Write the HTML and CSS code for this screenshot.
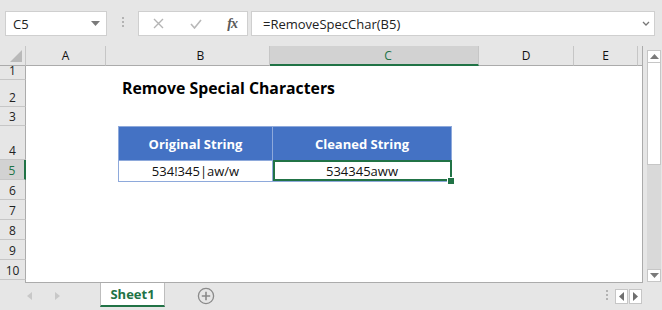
FILE: index.html
```html
<!DOCTYPE html>
<html lang="en">
<head>
  <meta charset="UTF-8" />
  <title>Remove Special Characters</title>
  <link rel="stylesheet" href="styles.css">
</head>
<body>
  <div class="app">
    <!-- formula bar -->
    <div class="formula-bar">
      <div class="namebox">
        <span>C5</span>
        <svg width="9" height="5" viewBox="0 0 9 5"><path d="M0 0h9L4.5 5z" fill="#7a7a7a"/></svg>
      </div>
      <div class="grip"><i></i><i></i><i></i></div>
      <div class="fx-box">
        <svg width="11" height="11" viewBox="0 0 11 11"><path d="M1 1l9 9M10 1l-9 9" stroke="#b4b4b4" stroke-width="1.4"/></svg>
        <svg width="12" height="10" viewBox="0 0 12 10"><path d="M1 5l3.5 4L11 1" stroke="#b8b8b8" stroke-width="1.6" fill="none"/></svg>
        <span class="fx">fx</span>
      </div>
      <div class="formula">
        <span>=RemoveSpecChar(B5)</span>
        <svg width="8" height="5" viewBox="0 0 8 5"><path d="M1 1l3 3 3-3" stroke="#777" stroke-width="1.3" fill="none"/></svg>
      </div>
    </div>

    <!-- sheet -->
    <div class="sheet">
      <div class="grid">
        <div class="col-headers">
          <div class="corner">
            <svg width="12" height="12" viewBox="0 0 12 12"><path d="M12 0v12H0z" fill="#b9b9b9"/></svg>
          </div>
          <div class="col w-a">A</div>
          <div class="col w-b">B</div>
          <div class="col w-c active">C</div>
          <div class="col w-d">D</div>
          <div class="col w-e">E</div>
          <div class="col w-f"></div>
        </div>
        <div class="grid-body">
          <div class="row-headers">
            <div class="rh" style="height:14px">1</div>
            <div class="rh" style="height:27px">2</div>
            <div class="rh" style="height:19px">3</div>
            <div class="rh" style="height:34px">4</div>
            <div class="rh active" style="height:20px">5</div>
            <div class="rh" style="height:20px">6</div>
            <div class="rh" style="height:20px">7</div>
            <div class="rh" style="height:20px">8</div>
            <div class="rh" style="height:20px">9</div>
            <div class="rh" style="height:20px">10</div>
            <div class="rh last"></div>
          </div>
          <div class="cells">
            <h1 class="title">Remove Special Characters</h1>
            <table class="data">
              <tr>
                <th class="c1">Original String</th>
                <th class="c2">Cleaned String</th>
              </tr>
              <tr>
                <td class="c1">534!345|aw/w</td>
                <td class="c2 selected">534345aww<span class="handle"></span></td>
              </tr>
            </table>
          </div>
        </div>
      </div>
      <div class="vscroll">
        <div class="sbtn up"><svg width="9" height="5" viewBox="0 0 9 5"><path d="M0 5h9L4.5 0z" fill="#7a7a7a"/></svg></div>
        <div class="thumb"></div>
        <div class="track"></div>
        <div class="sbtn down"><svg width="9" height="5" viewBox="0 0 9 5"><path d="M0 0h9L4.5 5z" fill="#7a7a7a"/></svg></div>
      </div>
    </div>

    <!-- sheet tabs -->
    <div class="tabbar">
      <div class="nav">
        <svg width="5" height="8" viewBox="0 0 5 8"><path d="M5 0v8L0 4z" fill="#c8c8c8"/></svg>
        <svg width="5" height="8" viewBox="0 0 5 8"><path d="M0 0v8l5-4z" fill="#c8c8c8"/></svg>
      </div>
      <div class="tab">Sheet1</div>
      <div class="add">
        <svg width="18" height="18" viewBox="0 0 18 18"><circle cx="9" cy="9" r="7.6" stroke="#8a8a8a" stroke-width="1.3" fill="none"/><path d="M9 4.8v8.4M4.8 9h8.4" stroke="#8a8a8a" stroke-width="1.6"/></svg>
      </div>
      <div class="spacer"></div>
      <div class="grip"><i></i><i></i><i></i></div>
      <div class="hnav">
        <div class="hbtn"><svg width="5" height="9" viewBox="0 0 5 9"><path d="M5 0v9L0 4.5z" fill="#6f6f6f"/></svg></div>
        <div class="hbtn"><svg width="5" height="9" viewBox="0 0 5 9"><path d="M0 0v9l5-4.5z" fill="#6f6f6f"/></svg></div>
      </div>
    </div>
  </div>
</body>
</html>
```

FILE: styles.css
```css
:root {
  font-family: 'Open Sans', 'Liberation Sans', sans-serif;
}
html, body {
  margin: 0; padding: 0;
  width: 662px;
  height: 310px;
  overflow: hidden;
}
.app {
  width: 662px;
  height: 310px;
  background: #e6e6e6;
  display: flex;
  flex-direction: column;
}

/* formula bar */
.formula-bar {
  height: 46px;
  box-sizing: border-box;
  padding: 11px 7px 0 5px;
  display: flex;
  align-items: flex-start;
}
.namebox, .fx-box, .formula {
  height: 25px;
  box-sizing: border-box;
  background: #fff;
  border: 1px solid #cfcfcf;
  display: flex;
  align-items: center;
}
.namebox {
  width: 102px;
  padding: 0 6px 0 7px;
  justify-content: space-between;
  font-size: 13px;
  color: #222;
}
.grip {
  width: 31px;
  display: flex;
  flex-direction: column;
  align-items: center;
  gap: 2px;
  padding-top: 6px;
}
.grip i {
  width: 2px;
  height: 2px;
  background: #b3b3b3;
}
.fx-box {
  width: 110px;
  padding: 0 8px 0 14px;
  justify-content: space-between;
}
.fx {
  font-family: 'Liberation Serif', serif;
  font-style: italic;
  font-weight: bold;
  font-size: 14px;
  color: #595959;
  letter-spacing: -1px;
  padding-right: 2px;
}
.formula {
  margin-left: 3px;
  flex: 1;
  padding: 0 4px 0 11px;
  justify-content: space-between;
  font-size: 13px;
  color: #222;
}

/* sheet */
.sheet {
  height: 238px;
  display: flex;
}
.grid {
  width: 643px;
  display: flex;
  flex-direction: column;
}
.col-headers {
  height: 20px;
  display: flex;
}
.corner {
  width: 26px;
  box-sizing: border-box;
  border-right: 1px solid #c6c6c6;
  border-bottom: 1px solid #ababab;
  display: flex;
  align-items: flex-end;
  justify-content: flex-end;
  padding: 0 3px 3px 0;
}
.col {
  box-sizing: border-box;
  border-right: 1px solid #c6c6c6;
  border-bottom: 1px solid #ababab;
  font-size: 12px;
  line-height: 19px;
  text-align: center;
  color: #111;
}
.w-a { width: 80px; }
.w-b { width: 164px; padding-left: 26px; }
.w-c { width: 209px; padding-left: 28px; }
.w-d { width: 95px; }
.w-e { width: 64px; }
.w-f { width: 5px; border-right: 1px solid #ababab; }
.col.active {
  background: #d2d2d2;
  color: #217346;
  border-bottom: 2px solid #217346;
}

.grid-body {
  flex: 1;
  display: flex;
  min-height: 0;
}
.row-headers {
  width: 26px;
  display: flex;
  flex-direction: column;
}
.rh {
  box-sizing: border-box;
  border-right: 1px solid #ababab;
  border-bottom: 1px solid #c6c6c6;
  font-size: 12px;
  display: flex;
  align-items: flex-end;
  justify-content: center;
  padding-bottom: 1px;
  line-height: 14px;
  color: #222;
}
.rh.active {
  background: #d2d2d2;
  color: #217346;
  border-right: 2px solid #217346;
}
.rh.last {
  flex: 1;
  border-bottom: none;
}
.cells {
  flex: 1;
  background: #fff;
  border-right: 1px solid #ababab;
  border-bottom: 1px solid #ababab;
  padding: 12px 0 0 92px;
}
.title {
  margin: 0 0 0 4px;
  font-size: 15.8px;
  line-height: 20px;
  font-weight: 700;
  color: #000;
  height: 48px;
}
.data {
  border-collapse: collapse;
  font-size: 13px;
}
.data th, .data td {
  padding: 0;
  text-align: center;
  box-sizing: border-box;
}
.data th {
  height: 34px;
  background: #4472c4;
  color: #fff;
  font-weight: 700;
  border: 1px solid #8ea9db;
  padding-top: 1px;
}
.data td {
  height: 21px;
  color: #111;
  border: 1px solid #8ea9db;
}
.data .c1 { width: 154px; }
.data .c2 { width: 179px; }
.data td.selected {
  position: relative;
  outline: 2px solid #217346;
  outline-offset: -2px;
}
.handle {
  position: absolute;
  right: -4px;
  bottom: -4px;
  width: 6px;
  height: 6px;
  background: #217346;
  border: 1px solid #fff;
}

/* vertical scrollbar */
.vscroll {
  flex: 1;
  display: flex;
  flex-direction: column;
  align-items: center;
  padding: 4px 0 1px 3px;
}
.sbtn {
  width: 14px;
  height: 13px;
  box-sizing: border-box;
  background: #fff;
  border: 1px solid #c6c6c6;
  display: flex;
  align-items: center;
  justify-content: center;
}
.thumb {
  width: 14px;
  height: 102px;
  box-sizing: border-box;
  background: #fff;
  border: 1px solid #c6c6c6;
  border-top: none;
}
.track {
  flex: 1;
  width: 14px;
  background: #d9d9d9;
}

/* tabs */
.tabbar {
  flex: 1;
  display: flex;
  align-items: flex-start;
}
.nav {
  width: 100px;
  display: flex;
  gap: 23px;
  padding: 9px 0 0 27px;
  box-sizing: border-box;
}
.tab {
  width: 65px;
  height: 24px;
  box-sizing: border-box;
  background: #fff;
  border: 1px solid #bdbdbd;
  border-top: none;
  border-bottom: 2px solid #217346;
  font-size: 13px;
  font-weight: 700;
  color: #217346;
  text-align: center;
  line-height: 22px;
}
.add {
  padding: 4px 0 0 32px;
}
.spacer { flex: 1; }
.tabbar .grip {
  width: 12px;
  padding-top: 7px;
}
.hnav {
  display: flex;
  gap: 1px;
  padding: 6px 20px 0 2px;
}
.hbtn {
  width: 13px;
  height: 15px;
  box-sizing: border-box;
  background: #fff;
  border: 1px solid #c6c6c6;
  display: flex;
  align-items: center;
  justify-content: center;
}
```
